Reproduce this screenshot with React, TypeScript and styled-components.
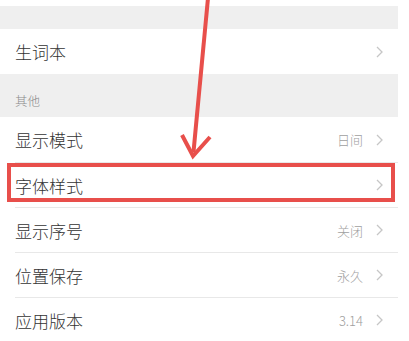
import React from "react";
import styled, { createGlobalStyle } from "styled-components";

type Item = { label: string; value?: string };

const others: Item[] = [
  { label: "显示模式", value: "日间" },
  { label: "字体样式" },
  { label: "显示序号", value: "关闭" },
  { label: "位置保存", value: "永久" },
  { label: "应用版本", value: "3.14" },
];

function Chevron() {
  return (
    <S.Chevron viewBox="0 0 7 12" width="7" height="12">
      <path d="M1 1l5 5-5 5" fill="none" stroke="#c6c6c6" strokeWidth="1.3" />
    </S.Chevron>
  );
}

function Row({ label, value }: Item) {
  return (
    <S.Row>
      <S.Label>{label}</S.Label>
      {value && <S.Value>{value}</S.Value>}
      <Chevron />
    </S.Row>
  );
}

export default function App() {
  return (
    <S.Page>
      <GlobalStyle />
      <S.List>
        <S.TopEdge />
        <S.Gap />
        <Row label="生词本" />
        <S.SectionHeader>其他</S.SectionHeader>
        <S.Group>
          {others.map((item) => (
            <Row key={item.label} {...item} />
          ))}
        </S.Group>
      </S.List>
      <S.Highlight />
      <S.Arrow viewBox="0 0 409 341" width="409" height="341">
        <path d="M208 -2 L193.5 152" stroke="#e84f4b" strokeWidth="4" fill="none" />
        <path
          d="M182 135 L193 156 L210 137"
          stroke="#e84f4b"
          strokeWidth="4"
          fill="none"
          strokeLinejoin="miter"
        />
      </S.Arrow>
    </S.Page>
  );
}

const GlobalStyle = createGlobalStyle`
  body {
    margin: 0;
    background: #fff;
    font-family: "Noto Sans CJK SC", "Noto Sans", "Liberation Sans", sans-serif;
  }
`;

const S = {
  Page: styled.div`
    position: relative;
    width: 409px;
    height: 341px;
    overflow: hidden;
    background: #fff;
  `,
  List: styled.div`
    width: 398px;
    display: flex;
    flex-direction: column;
  `,
  TopEdge: styled.div`
    height: 6px;
    background: #fff;
  `,
  Gap: styled.div`
    height: 23px;
    background: #efefef;
  `,
  SectionHeader: styled.div`
    height: 43px;
    box-sizing: border-box;
    padding: 0 15px 7px;
    display: flex;
    align-items: flex-end;
    background: #efefef;
    color: #8a8a8a;
    font-size: 12.5px;
    font-weight: 300;
  `,
  Group: styled.div`
    display: flex;
    flex-direction: column;

    & > * + * {
      border-top: 1px solid transparent;
    }
    & > * + *::before {
      content: "";
      position: absolute;
      top: -1px;
      left: 15px;
      right: 0;
      height: 1px;
      background: #e8e8e8;
    }
  `,
  Row: styled.div`
    position: relative;
    height: 45px;
    box-sizing: border-box;
    display: flex;
    align-items: center;
    padding: 0 15px;
    background: #fff;
  `,
  Label: styled.span`
    flex: 1;
    font-size: 17px;
    font-weight: 300;
    color: #333;
  `,
  Value: styled.span`
    margin-right: 13px;
    font-size: 13px;
    font-weight: 300;
    color: #a0a0a0;
  `,
  Chevron: styled.svg`
    display: block;
    flex: none;
  `,
  Highlight: styled.div`
    position: absolute;
    left: 7px;
    top: 163px;
    width: 388px;
    height: 39px;
    box-sizing: border-box;
    border: 4px solid #e84f4b;
  `,
  Arrow: styled.svg`
    position: absolute;
    left: 0;
    top: 0;
    pointer-events: none;
  `,
};
